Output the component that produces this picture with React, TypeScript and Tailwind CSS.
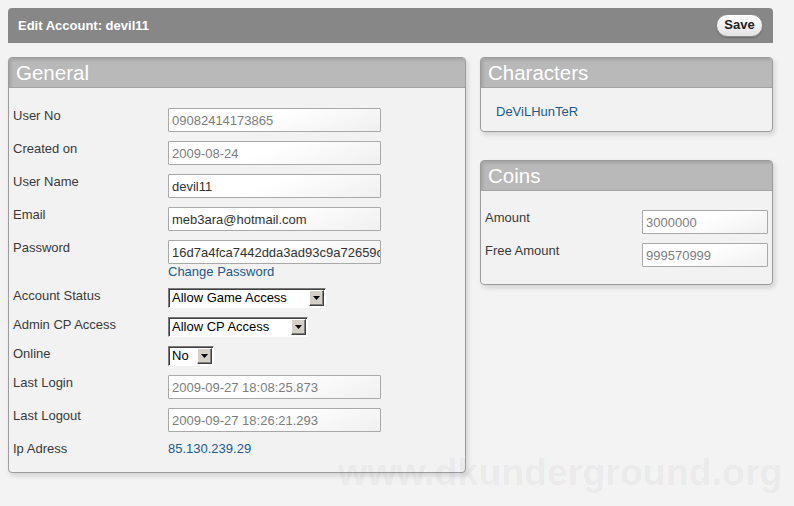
import React from "react";

const font = { fontFamily: '"Liberation Sans", Arial, sans-serif' };

function TextBox({ value, disabled, w }: { value: string; disabled?: boolean; w: string }) {
  return (
    <div
      className={`${w} h-[24px] overflow-hidden whitespace-nowrap rounded-[1px] border border-[#a9a9a9] bg-[linear-gradient(160deg,#ffffff_45%,#f0f0f0)] pl-[3px] pt-[2px] text-[13px] leading-[20px] ${
        disabled ? "text-[#7d7d7d]" : "text-[#333333]"
      }`}
    >
      {value}
    </div>
  );
}

function Select({ text, w }: { text: string; w: string }) {
  return (
    <div
      className={`${w} flex h-[20px] items-center border border-t-[#7a7a7a] border-l-[#7a7a7a] border-b-white border-r-white bg-white shadow-[inset_1px_1px_0_#404040]`}
    >
      <span className="flex-1 whitespace-nowrap pl-[3px] text-[13px] leading-[18px] text-black">{text}</span>
      <div className="mr-[1px] flex h-[16px] w-[15px] items-center justify-center border border-t-white border-l-white border-b-[#404040] border-r-[#404040] bg-[#d4d0c8] shadow-[inset_-1px_-1px_0_#808080]">
        <svg width="7" height="4" viewBox="0 0 7 4">
          <path d="M0 0h7L3.5 4z" fill="#000" />
        </svg>
      </div>
    </div>
  );
}

function Panel({ title, children, className }: { title: string; children: React.ReactNode; className?: string }) {
  return (
    <div
      className={`rounded-[4px] border border-[#9c9c9c] bg-[#f2f2f2] shadow-[2px_3px_5px_rgba(0,0,0,0.13)] ${className ?? ""}`}
    >
      <div className="h-[30px] rounded-t-[3px] border-b border-[#a3a3a3] bg-[#b9b9b9] pl-[7px] text-[20.5px] leading-[29px] text-white shadow-[inset_2px_2px_3px_rgba(0,0,0,0.12)]">
        {title}
      </div>
      {children}
    </div>
  );
}

function Row({ label, children, last }: { label: string; children: React.ReactNode; last?: boolean }) {
  return (
    <div className={`flex items-start ${last ? "" : "mb-[9px]"}`}>
      <div className="w-[155px] shrink-0 text-[13px] leading-[15px] text-[#3a3a3a]">{label}</div>
      <div>{children}</div>
    </div>
  );
}

function CoinRow({ label, children, last }: { label: string; children: React.ReactNode; last?: boolean }) {
  return (
    <div className={`flex items-start ${last ? "" : "mb-[9px]"}`}>
      <div className="w-[157px] shrink-0 text-[13px] leading-[15px] text-[#3a3a3a]">{label}</div>
      <div>{children}</div>
    </div>
  );
}

export default function App() {
  return (
    <div className="relative h-[506px] w-[794px] overflow-hidden bg-[#f3f3f3] p-[8px]" style={font}>
      <div className="flex h-[35px] w-[765px] items-center justify-between rounded-t-[4px] bg-[#878787] pl-[10px] pr-[10px]">
        <span className="text-[13px] font-bold leading-[35px] text-white">Edit Account: devil11</span>
        <button className="mb-[1px] h-[23px] w-[47px] rounded-full border border-[#8a8a8a] bg-[linear-gradient(to_bottom,#ffffff,#e2e2e2)] text-[13px] font-bold leading-[20px] text-[#222222] shadow-[0_1px_1px_rgba(0,0,0,0.2)]">
          Save
        </button>
      </div>

      <div className="mt-[14px] flex items-start gap-[14px]">
        <Panel title="General" className="w-[458px]">
          <div className="pb-[16px] pl-[4px] pt-[20px]">
            <Row label="User No">
              <TextBox w="w-[213px]" value="09082414173865" disabled />
            </Row>
            <Row label="Created on">
              <TextBox w="w-[213px]" value="2009-08-24" disabled />
            </Row>
            <Row label="User Name">
              <TextBox w="w-[213px]" value="devil11" />
            </Row>
            <Row label="Email">
              <TextBox w="w-[213px]" value="meb3ara@hotmail.com" />
            </Row>
            <Row label="Password">
              <TextBox w="w-[213px]" value="16d7a4fca7442dda3ad93c9a72659c1f" />
              <div className="text-[13px] leading-[15px] text-[#215b8c]">Change Password</div>
            </Row>
            <Row label="Account Status">
              <Select w="w-[158px]" text="Allow Game Access" />
            </Row>
            <Row label="Admin CP Access">
              <Select w="w-[140px]" text="Allow CP Access" />
            </Row>
            <Row label="Online">
              <Select w="w-[46px]" text="No" />
            </Row>
            <Row label="Last Login">
              <TextBox w="w-[213px]" value="2009-09-27 18:08:25.873" disabled />
            </Row>
            <Row label="Last Logout">
              <TextBox w="w-[213px]" value="2009-09-27 18:26:21.293" disabled />
            </Row>
            <Row label="Ip Adress" last>
              <div className="text-[13px] leading-[15px] text-[#215b8c]">85.130.239.29</div>
            </Row>
          </div>
        </Panel>

        <div className="flex w-[293px] flex-col gap-[28px]">
          <Panel title="Characters">
            <div className="pb-[12px] pl-[15px] pt-[16px] text-[13px] leading-[15px] text-[#215b8c]">DeViLHunTeR</div>
          </Panel>
          <Panel title="Coins">
            <div className="pb-[17px] pl-[4px] pt-[19px]">
              <CoinRow label="Amount">
                <TextBox w="w-[126px]" value="3000000" disabled />
              </CoinRow>
              <CoinRow label="Free Amount" last>
                <TextBox w="w-[126px]" value="999570999" disabled />
              </CoinRow>
            </div>
          </Panel>
        </div>
      </div>

      <div className="pointer-events-none absolute left-[338px] top-[454px] whitespace-nowrap text-[37.5px] font-bold leading-none text-[rgba(0,0,0,0.055)]">
        www.dkunderground.org
      </div>
    </div>
  );
}
